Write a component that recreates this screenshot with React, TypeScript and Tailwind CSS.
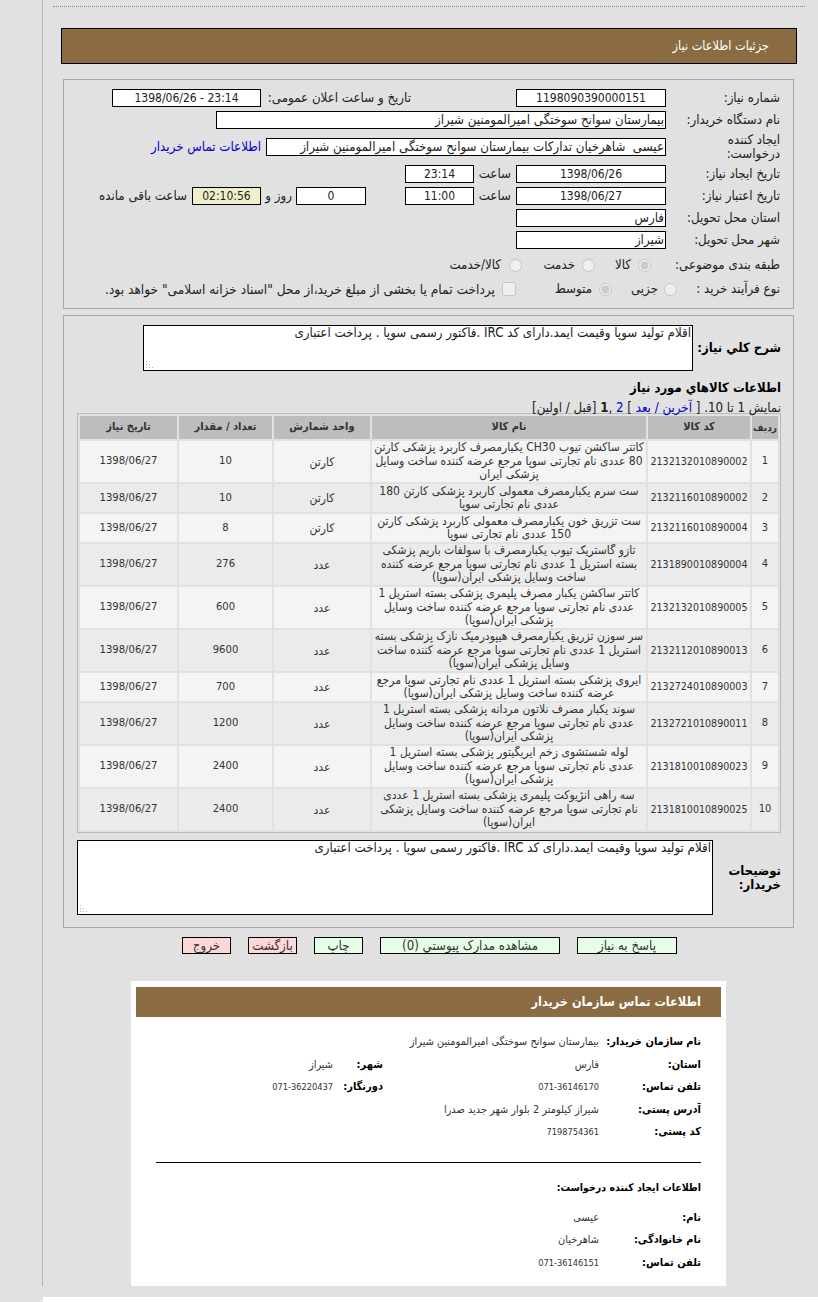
import React from 'react';

const items = [
  { code: '2132132010890002', name: ['کاتتر ساکشن تیوب CH30 یکبارمصرف کاربرد پزشکی کارتن', '80 عددی نام تجارتی سوپا مرجع عرضه کننده ساخت وسایل', 'پزشکی ایران'], unit: 'کارتن', qty: '10' },
  { code: '2132116010890002', name: ['ست سرم یکبارمصرف معمولی کاربرد پزشکی کارتن 180', 'عددی نام تجارتی سوپا'], unit: 'کارتن', qty: '10' },
  { code: '2132116010890004', name: ['ست تزریق خون یکبارمصرف معمولی کاربرد پزشکی کارتن', '150 عددی نام تجارتی سوپا'], unit: 'کارتن', qty: '8' },
  { code: '2131890010890004', name: ['تازو گاستریک تیوب یکبارمصرف با سولفات باریم پزشکی', 'بسته استریل 1 عددی نام تجارتی سوپا مرجع عرضه کننده', 'ساخت وسایل پزشکی ایران(سوپا)'], unit: 'عدد', qty: '276' },
  { code: '2132132010890005', name: ['کاتتر ساکشن یکبار مصرف پلیمری پزشکی بسته استریل 1', 'عددی نام تجارتی سوپا مرجع عرضه کننده ساخت وسایل', 'پزشکی ایران(سوپا)'], unit: 'عدد', qty: '600' },
  { code: '2132112010890013', name: ['سر سوزن تزریق یکبارمصرف هیپودرمیک نازک پزشکی بسته', 'استریل 1 عددی نام تجارتی سوپا مرجع عرضه کننده ساخت', 'وسایل پزشکی ایران(سوپا)'], unit: 'عدد', qty: '9600' },
  { code: '2132724010890003', name: ['ایروی پزشکی بسته استریل 1 عددی نام تجارتی سوپا مرجع', 'عرضه کننده ساخت وسایل پزشکی ایران(سوپا)'], unit: 'عدد', qty: '700' },
  { code: '2132721010890011', name: ['سوند یکبار مصرف نلاتون مردانه پزشکی بسته استریل 1', 'عددی نام تجارتی سوپا مرجع عرضه کننده ساخت وسایل', 'پزشکی ایران(سوپا)'], unit: 'عدد', qty: '1200' },
  { code: '2131810010890023', name: ['لوله شستشوی زخم ایریگیتور پزشکی بسته استریل 1', 'عددی نام تجارتی سوپا مرجع عرضه کننده ساخت وسایل', 'پزشکی ایران(سوپا)'], unit: 'عدد', qty: '2400' },
  { code: '2131810010890025', name: ['سه راهی آنژیوکت پلیمری پزشکی بسته استریل 1 عددی', 'نام تجارتی سوپا مرجع عرضه کننده ساخت وسایل پزشکی', 'ایران(سوپا)'], unit: 'عدد', qty: '2400' },
];

const description = 'اقلام تولید سوپا وقیمت آیمد.دارای کد IRC .فاکتور رسمی سوپا . پرداخت اعتباری';

const Field = ({ className, children }: { className: string; children?: React.ReactNode }) => (
  <div className={`h-[18px] border border-black leading-[16px] whitespace-nowrap overflow-hidden ${className}`}>
    {children}
  </div>
);

const Label = ({ children }: { children: React.ReactNode }) => (
  <div className="w-[114px] shrink-0 whitespace-nowrap">{children}</div>
);

const Radio = ({ checked, className }: { checked?: boolean; className?: string }) => (
  <input type="radio" disabled checked={!!checked} readOnly className={`m-0 w-[13px] h-[13px] shrink-0 ${className ?? ''}`} />
);

const Btn = ({ w, red, children }: { w: string; red?: boolean; children: React.ReactNode }) => (
  <div className={`${w} h-[17px] border border-black text-center leading-[15px] text-[#333] whitespace-nowrap overflow-hidden ${red ? 'bg-[#ffd7d7]' : 'bg-[#e6ffe6]'}`}>
    {children}
  </div>
);

// readonly box with the dotted grip the old browser drew in its corner
const Memo = ({ className }: { className: string }) => (
  <div className={`relative shrink-0 ${className}`}>
    <textarea readOnly value={description} className="w-full h-full border border-black bg-white block leading-[14px] text-[13.2px] px-[1px] py-0 outline-none resize-none" />
    <svg className="absolute left-[2px] bottom-[2px]" width="9" height="9" viewBox="0 0 9 9" fill="#b5b5b5">
      <rect x="1" y="7" width="1" height="1" />
      <rect x="4" y="7" width="1" height="1" />
      <rect x="7" y="7" width="1" height="1" />
      <rect x="1" y="4" width="1" height="1" />
      <rect x="4" y="4" width="1" height="1" />
      <rect x="1" y="1" width="1" height="1" />
    </svg>
  </div>
);

const Num = ({ children }: { children: React.ReactNode }) => <span className="text-[9.2px]">{children}</span>;

const ContactRow = ({ label, value, label2, value2, mt }: { label: string; value: React.ReactNode; label2?: string; value2?: React.ReactNode; mt?: string }) => (
  <div className={`flex items-center h-[22.5px] ${mt ?? ''}`}>
    <div className="w-[102px] shrink-0 font-bold text-[11px] text-black whitespace-nowrap">{label}</div>
    <div className="w-[216px] shrink-0 text-[10.9px] text-[#333] whitespace-nowrap">{value}</div>
    {label2 && <div className="w-[50px] shrink-0 font-bold text-[11px] text-black whitespace-nowrap">{label2}</div>}
    {value2 && <div className="text-[10.9px] text-[#333] whitespace-nowrap">{value2}</div>}
  </div>
);

export default function App() {
  return (
    <div dir="rtl" className="w-[818px] h-[1302px] overflow-hidden bg-[#e1e1e1] text-[13.2px] text-[#222] font-['DejaVu_Sans_Condensed','DejaVu_Sans',sans-serif]">
      <div className="ml-[42px] h-[1286px] border-l border-[#b4b4b4] pt-[6px]">
        <div className="mr-[13px] ml-[10px] border-t border-dotted border-[#888]" />

        <div className="mt-[21px] mr-[21px] w-[736px] h-[36px] border border-black bg-[#8b6c42] flex items-center pr-[27px] text-white text-[12.6px]">
          جزئیات اطلاعات نیاز
        </div>

        <div className="mt-[15px] mr-[24px] w-[731px] h-[230px] border border-[#a8a8a8] pt-[7px] pr-[13px]">
          <div className="flex items-center h-[22px]">
            <Label>شماره نیاز:</Label>
            <Field className="w-[150px] bg-white text-center text-[12px]">1198090390000151</Field>
            <div className="mr-[105px] w-[144px] whitespace-nowrap">تاریخ و ساعت اعلان عمومی:</div>
            <Field className="mr-[6px] w-[149px] bg-white text-center text-[12px]"><span dir="ltr">1398/06/26 - 23:14</span></Field>
          </div>
          <div className="flex items-center h-[22px]">
            <Label>نام دستگاه خریدار:</Label>
            <Field className="w-[450px] bg-white pr-[1px]">بیمارستان سوانح سوختگی امیرالمومنین شیراز</Field>
          </div>
          <div className="flex items-center h-[32px]">
            <div className="w-[114px] shrink-0 leading-[14px]">ایجاد کننده<br />درخواست:</div>
            <Field className="w-[400px] bg-white pr-[1px]">عیسی&nbsp; شاهرخیان تدارکات بیمارستان سوانح سوختگی امیرالمومنین شیراز</Field>
            <div className="mr-[5px] text-[#0000cc] whitespace-nowrap">اطلاعات تماس خریدار</div>
          </div>
          <div className="flex items-center h-[22px]">
            <Label>تاریخ ایجاد نیاز:</Label>
            <Field className="w-[150px] bg-white text-center text-[12px]">1398/06/26</Field>
            <div className="w-[42px] pr-[5px] whitespace-nowrap">ساعت</div>
            <Field className="w-[69px] bg-white text-center text-[12px]">23:14</Field>
          </div>
          <div className="flex items-center h-[22px]">
            <Label>تاریخ اعتبار نیاز:</Label>
            <Field className="w-[150px] bg-white text-center text-[12px]">1398/06/27</Field>
            <div className="w-[42px] pr-[5px] whitespace-nowrap">ساعت</div>
            <Field className="w-[69px] bg-white text-center text-[12px]">11:00</Field>
            <Field className="mr-[39px] w-[70px] bg-white text-center text-[12px]">0</Field>
            <div className="mr-[4px] w-[31px] whitespace-nowrap">روز و</div>
            <Field className="w-[69px] bg-[#f1efc9] text-center text-[12px]">02:10:56</Field>
            <div className="mr-[5px] whitespace-nowrap">ساعت باقی مانده</div>
          </div>
          <div className="flex items-center h-[22px]">
            <Label>استان محل تحویل:</Label>
            <Field className="w-[150px] bg-white pr-[1px]">فارس</Field>
          </div>
          <div className="flex items-center h-[22px]">
            <Label>شهر محل تحویل:</Label>
            <Field className="w-[150px] bg-white pr-[1px]">شیراز</Field>
          </div>
          <div className="flex items-center h-[28px]">
            <Label>طبقه بندی موضوعی:</Label>
            <Radio checked className="mr-[15px]" />
            <span className="mr-[7px] w-[36px] shrink-0 whitespace-nowrap">کالا</span>
            <Radio />
            <span className="mr-[7px] w-[53px] shrink-0 whitespace-nowrap">خدمت</span>
            <Radio />
            <span className="mr-[8px] whitespace-nowrap">کالا/خدمت</span>
          </div>
          <div className="flex items-center h-[20px]">
            <Label>نوع فرآیند خرید :</Label>
            <Radio className="mr-[-11px]" />
            <span className="mr-[6px] w-[46px] shrink-0 whitespace-nowrap">جزیی</span>
            <Radio checked />
            <span className="mr-[7px] w-[76px] shrink-0 whitespace-nowrap">متوسط</span>
            <input type="checkbox" disabled className="m-0 w-[14px] h-[14px] shrink-0" />
            <span className="mr-[7px] whitespace-nowrap text-[13.6px]">پرداخت تمام یا بخشی از مبلغ خرید،از محل "اسناد خزانه اسلامی" خواهد بود.</span>
          </div>
        </div>

        <div className="mt-[6px] mr-[24px] w-[731px] h-[613px] border border-[#a8a8a8] pt-[9px] pr-[12px]">
          <div className="flex items-center justify-between w-[638px]">
            <div className="font-bold text-[13px] text-black whitespace-nowrap">شرح کلي نیاز:</div>
            <Memo className="w-[550px] h-[46px]" />
          </div>
          <div className="mt-[8px] h-[18px] leading-[18px] font-bold text-[13px] text-black">اطلاعات کالاهاي مورد نیاز</div>
          <div className="mt-[5px] h-[11px] leading-[11px] whitespace-nowrap">
            نمایش 1 تا 10. [ <span className="text-[#0000cc]">آخرین / بعد</span> ] <span className="text-[#0000cc]">2</span> ,<b>1</b> [قبل / اولین]
          </div>
          <table className="table-fixed w-[704px] border border-[#b9b9b9] border-separate border-spacing-[2px] text-center text-[#333] text-[12px]">
            <thead>
              <tr className="h-[23px] font-bold">
                <th className="w-[26px] p-0 bg-[#bdbdbd] text-[10px]">ردیف</th>
                <th className="w-[102px] p-0 bg-[#bdbdbd] text-[11px]">کد کالا</th>
                <th className="w-[274px] p-0 bg-[#bdbdbd] text-[11px]">نام کالا</th>
                <th className="w-[96px] p-0 bg-[#bdbdbd] text-[11px]">واحد شمارش</th>
                <th className="w-[93px] p-0 bg-[#bdbdbd] text-[11px]">تعداد / مقدار</th>
                <th className="w-[97px] p-0 bg-[#bdbdbd] text-[11px]">تاریخ نیاز</th>
              </tr>
            </thead>
            <tbody>
              {items.map((it, i) => (
                <tr key={it.code} className={`${it.name.length === 3 ? 'h-[41px]' : 'h-[28px]'} ${i % 2 === 0 ? 'bg-[#f4f4f4]' : 'bg-[#ebebeb]'}`}>
                  <td className="p-0 text-[11px]">{i + 1}</td>
                  <td className="p-0 text-[10.6px]">{it.code}</td>
                  <td className="p-0 leading-[13.5px] whitespace-nowrap overflow-hidden">
                    {it.name.map((line, n) => (
                      <div key={n}>{line}</div>
                    ))}
                  </td>
                  <td className="p-0">{it.unit}</td>
                  <td className="p-0 text-[11.2px]">{it.qty}</td>
                  <td className="p-0 text-[11.2px]">1398/06/27</td>
                </tr>
              ))}
            </tbody>
          </table>
          <div className="mt-[7px] flex items-center justify-between w-[704px]">
            <div className="font-bold text-[13px] leading-[14px] text-black">توضیحات<br />خریدار:</div>
            <Memo className="w-[636px] h-[75px]" />
          </div>
        </div>

        <div className="mt-[9px] mr-[23px] w-[731px] flex justify-center gap-[17px]">
          <Btn w="w-[100px]">پاسخ به نیاز</Btn>
          <Btn w="w-[180px]">مشاهده مدارک پیوستي (0)</Btn>
          <Btn w="w-[49px]">چاپ</Btn>
          <Btn w="w-[49px]" red>بازگشت</Btn>
          <Btn w="w-[49px]" red>خروج</Btn>
        </div>

        <div className="mt-[27px] mr-[92px] w-[595px] h-[305px] bg-white pt-[6px] px-[5px]">
          <div className="h-[30px] bg-[#8b6c42] flex items-center pr-[20px] font-bold text-white text-[12.6px]">اطلاعات تماس سازمان خریدار</div>
          <div className="pr-[20px] pl-[20px] pt-[14px]">
            <ContactRow label="نام سازمان خریدار:" value="بیمارستان سوانح سوختگی امیرالمومنین شیراز" />
            <ContactRow label="استان:" value="فارس" label2="شهر:" value2="شیراز" />
            <ContactRow label="تلفن تماس:" value={<Num>071-36146170</Num>} label2="دورنگار:" value2={<Num>071-36220437</Num>} />
            <ContactRow label="آدرس پستی:" value="شیراز کیلومتر 2 بلوار شهر جدید صدرا" />
            <ContactRow label="کد پستی:" value={<Num>7198754361</Num>} />
            <div className="mt-[18px] border-t border-black" />
            <div className="mt-[13px] h-[22px] leading-[22px] font-bold text-[10.5px] text-black">اطلاعات ایجاد کننده درخواست:</div>
            <ContactRow mt="mt-[9px]" label="نام:" value="عیسی" />
            <ContactRow label="نام خانوادگی:" value="شاهرخیان" />
            <ContactRow label="تلفن تماس:" value={<Num>071-36146151</Num>} />
          </div>
        </div>
      </div>
      <div className="mt-[11px] ml-[43px] h-[5px] bg-white" />
    </div>
  );
}
